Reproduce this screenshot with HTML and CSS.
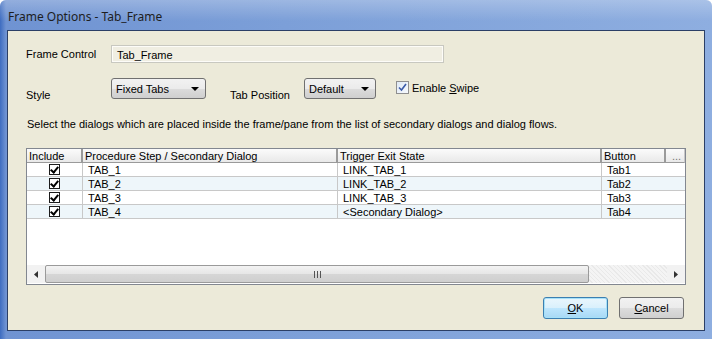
FILE: index.html
```html
<!DOCTYPE html>
<html lang="en">
<head>
  <meta charset="UTF-8">
  <title>Frame Options - Tab_Frame</title>
  <link rel="stylesheet" href="styles.css">
</head>
<body>
  <div class="window">
    <div class="titlebar">Frame Options - Tab_Frame</div>
    <div class="client">
      <!-- Fila: control de marco -->
      <div class="row row-frame">
        <span class="label label-frame">Frame Control</span>
        <div class="textbox">Tab_Frame</div>
      </div>
      <!-- Fila: estilo y posicion -->
      <div class="row row-style">
        <span class="label label-style">Style</span>
        <div class="combo combo-style">Fixed Tabs<span class="arrow"></span></div>
        <span class="label label-pos">Tab Position</span>
        <div class="combo combo-pos">Default<span class="arrow"></span></div>
        <label class="swipe">
          <span class="check-blue">
            <svg width="9" height="9" viewBox="0 0 9 9"><path d="M1 4.5 L3.5 7 L8 1" fill="none" stroke="#3a5aa8" stroke-width="1.6"/></svg>
          </span>
          <span>Enable <u>S</u>wipe</span>
        </label>
      </div>
      <p class="hint">Select the dialogs which are placed inside the frame/pane from the list of secondary dialogs and dialog flows.</p>

      <div class="grid">
        <div class="grid-head">
          <div class="col c-inc">Include</div>
          <div class="col c-proc">Procedure Step / Secondary Dialog</div>
          <div class="col c-trig">Trigger Exit State</div>
          <div class="col c-btn">Button</div>
          <div class="col c-more">...</div>
        </div>
        <div class="grid-body">
          <div class="grid-row">
            <div class="cell c-inc"><span class="cb"></span></div>
            <div class="cell c-proc">TAB_1</div>
            <div class="cell c-trig">LINK_TAB_1</div>
            <div class="cell c-btn">Tab1</div>
          </div>
          <div class="grid-row alt">
            <div class="cell c-inc"><span class="cb"></span></div>
            <div class="cell c-proc">TAB_2</div>
            <div class="cell c-trig">LINK_TAB_2</div>
            <div class="cell c-btn">Tab2</div>
          </div>
          <div class="grid-row">
            <div class="cell c-inc"><span class="cb"></span></div>
            <div class="cell c-proc">TAB_3</div>
            <div class="cell c-trig">LINK_TAB_3</div>
            <div class="cell c-btn">Tab3</div>
          </div>
          <div class="grid-row alt">
            <div class="cell c-inc"><span class="cb"></span></div>
            <div class="cell c-proc">TAB_4</div>
            <div class="cell c-trig">&lt;Secondary Dialog&gt;</div>
            <div class="cell c-btn">Tab4</div>
          </div>
        </div>
        <div class="hscroll">
          <div class="sb-arrow">
            <svg width="4" height="7" viewBox="0 0 4 7"><path d="M4 0 L0 3.5 L4 7 Z" fill="#333"/></svg>
          </div>
          <div class="sb-thumb"><span class="grip"></span></div>
          <div class="sb-track"></div>
          <div class="sb-arrow">
            <svg width="4" height="7" viewBox="0 0 4 7"><path d="M0 0 L4 3.5 L0 7 Z" fill="#333"/></svg>
          </div>
        </div>
      </div>

      <div class="buttons">
        <button class="btn btn-default" type="button"><u>O</u>K</button>
        <button class="btn" type="button"><u>C</u>ancel</button>
      </div>
    </div>
  </div>
</body>
</html>
```

FILE: styles.css
```css
/* Ventana general */
body {
  margin: 0;
  font-family: "Liberation Sans", Arial, sans-serif;
  font-size: 11px;
  color: #000;
}
.window {
  width: 712px;
  height: 339px;
  box-sizing: border-box;
  background: linear-gradient(90deg, #3d6cc0 0, #6f93d2 6px, #7c9fd8 40%, #8eaee0 100%);
  border-radius: 6px 6px 0 0;
  display: flex;
  flex-direction: column;
}
.titlebar {
  height: 30px;
  line-height: 33px;
  padding-left: 8px;
  font-family: "Noto Sans", "DejaVu Sans", sans-serif;
  font-size: 12px;
  color: #1e1e1e;
  background: linear-gradient(180deg, rgba(255,255,255,0.25), rgba(255,255,255,0) 70%);
  border-radius: 6px 6px 0 0;
}
.client {
  margin: 0 7px 0 7px;
  height: 301px;
  box-sizing: border-box;
  background-color: #ecead9;
  border: 1px solid #2b3f66;
  padding: 0 0 0 18px;
}
.row {
  display: flex;
}
.label {
  display: block;
}
.row-frame {
  margin-top: 14px;
  align-items: center;
}
.label-frame {
  width: 85px;
}
.textbox {
  width: 333px;
  height: 18px;
  line-height: 18px;
  box-sizing: border-box;
  padding-left: 5px;
  border: 1px solid #c8c8c0;
  background-color: #f0eee2;
  box-shadow: inset 0 0 0 1px #fdfcf8;
}
.row-style {
  margin-top: 15px;
  align-items: flex-start;
}
.label-style {
  width: 85px;
  margin-top: 11px;
}
.label-pos {
  margin: 11px 14px 0 24px;
}
.combo {
  position: relative;
  height: 21px;
  line-height: 20px;
  box-sizing: border-box;
  padding-left: 4px;
  border: 1px solid #707070;
  border-radius: 3px;
  background: linear-gradient(180deg, #f2f2f2 0, #ebebeb 50%, #dcdcdc 51%, #cfcfcf 100%);
}
.combo-style {
  width: 95px;
}
.combo-pos {
  width: 72px;
}
.arrow {
  position: absolute;
  right: 6px;
  top: 8px;
  border-left: 4px solid transparent;
  border-right: 4px solid transparent;
  border-top: 4px solid #000;
}
.swipe {
  display: flex;
  align-items: center;
  margin: 3px 0 0 20px;
  gap: 3px;
}
.check-blue {
  width: 11px;
  height: 11px;
  border: 1px solid #8f8f8f;
  background: linear-gradient(135deg, #dfe9f5, #f6f9fd);
  display: flex;
  align-items: center;
  justify-content: center;
}
.hint {
  margin: 16px 0 0 1px;
  line-height: 14px;
}

/* Tabla de dialogos */
.grid {
  margin-top: 17px;
  width: 660px;
  height: 137px;
  box-sizing: border-box;
  border: 1px solid #828790;
  background-color: #fff;
  display: flex;
  flex-direction: column;
}
.grid-head {
  display: flex;
  height: 14px;
  background-color: #f0f0f0;
}
.col {
  height: 14px;
  line-height: 14px;
  box-sizing: border-box;
  padding-left: 2px;
  border-right: 2px solid #9a9a9a;
  border-bottom: 1px solid #9a9a9a;
  background: linear-gradient(180deg, #fbfbfb, #e9e9e9);
  white-space: nowrap;
}
.c-inc { width: 56px; }
.c-proc { width: 255px; }
.c-trig { width: 264px; }
.c-btn { width: 64px; }
.c-more {
  width: 19px;
  color: #777;
  padding-left: 6px;
  border-right: 1px solid #c8c8c8;
}
.grid-body {
  flex: 1;
}
.grid-row {
  display: flex;
  height: 14px;
}
.grid-row.alt {
  background-color: #eef6fa;
}
.cell {
  height: 14px;
  line-height: 14px;
  box-sizing: border-box;
  padding-left: 5px;
  border-right: 1px solid #c8c8c8;
  border-bottom: 1px solid #c8c8c8;
  white-space: nowrap;
}
.cell.c-inc {
  display: flex;
  justify-content: center;
  align-items: center;
  padding-left: 0;
}
.cell.c-btn {
  width: 83px;
  border-right: none;
}
.cb {
  width: 11px;
  height: 11px;
  box-sizing: border-box;
  border: 1px solid #1c1c1c;
  background-color: #fff;
  position: relative;
}
.cb::after {
  content: "";
  position: absolute;
  left: 2px;
  top: 0px;
  width: 3px;
  height: 6px;
  border-right: 2px solid #000;
  border-bottom: 2px solid #000;
  transform: rotate(40deg);
}

/* Barra de desplazamiento */
.hscroll {
  display: flex;
  height: 18px;
  margin-bottom: 1px;
  background-color: #f2f2f2;
}
.sb-arrow {
  width: 18px;
  display: flex;
  align-items: center;
  justify-content: center;
}
.sb-thumb {
  width: 544px;
  box-sizing: border-box;
  border: 1px solid #9a9a9a;
  border-radius: 2px;
  background: linear-gradient(180deg, #f3f3f3 0, #e6e6e6 50%, #d6d6d6 51%, #cfcfcf 100%);
  display: flex;
  align-items: center;
  justify-content: center;
}
.grip {
  width: 7px;
  height: 7px;
  background: repeating-linear-gradient(90deg, #555 0, #555 1px, transparent 1px, transparent 3px);
}
.sb-track {
  flex: 1;
  background: repeating-linear-gradient(45deg, #f4f4f4 0, #f4f4f4 2px, #e9e9e9 2px, #e9e9e9 3px);
}

/* Botones */
.buttons {
  display: flex;
  justify-content: flex-end;
  gap: 11px;
  margin: 12px 20px 0 0;
}
.btn {
  width: 65px;
  height: 22px;
  padding: 0;
  font-family: "Liberation Sans", Arial, sans-serif;
  font-size: 11px;
  border: 1px solid #707070;
  border-radius: 3px;
  background: linear-gradient(180deg, #f2f2f2 0, #ebebeb 50%, #dddddd 51%, #cfcfcf 100%);
}
.btn-default {
  border-color: #3c7fb1;
  box-shadow: inset 0 0 0 1px #a6e1f8;
  background: linear-gradient(180deg, #eaf6fd 0, #d9f0fc 50%, #bee6fd 51%, #a7d9f5 100%);
}
```
